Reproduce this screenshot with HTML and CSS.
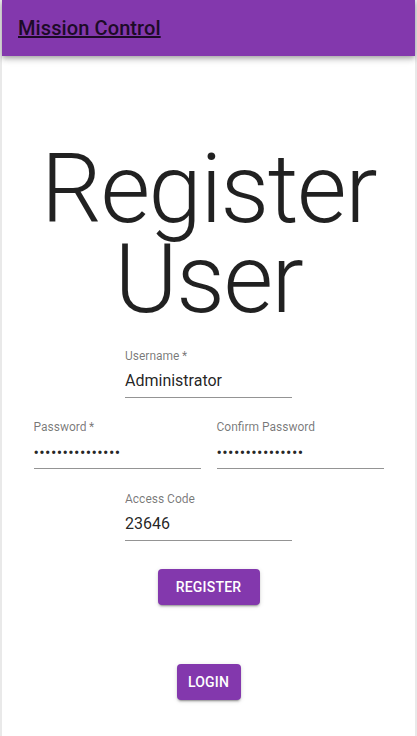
FILE: index.html
```html
<!DOCTYPE html>
<html lang="en">
<head>
<meta charset="utf-8">
<title>Mission Control</title>
<link rel="stylesheet" href="styles.css">
</head>
<body>
<div class="page">
  <header class="appbar">
    <a class="brand" href="#">Mission Control</a>
  </header>
  <main class="content">
    <h1 class="title">Register User</h1>
    <form class="form">
      <div class="row">
        <div class="field">
          <label class="label">Username&thinsp;*</label>
          <div class="input">Administrator</div>
        </div>
      </div>
      <div class="row">
        <div class="field">
          <label class="label">Password&thinsp;*</label>
          <div class="input dots">•••••••••••••••</div>
        </div>
        <div class="field">
          <label class="label">Confirm Password</label>
          <div class="input dots">•••••••••••••••</div>
        </div>
      </div>
      <div class="row">
        <div class="field">
          <label class="label">Access Code</label>
          <div class="input">23646</div>
        </div>
      </div>
      <div class="actions">
        <button type="button" class="btn btn-register">Register</button>
      </div>
      <div class="actions login">
        <button type="button" class="btn btn-login">Login</button>
      </div>
    </form>
  </main>
</div>
</body>
</html>
```
FILE: styles.css
```css
* { box-sizing: border-box; }
html, body { margin: 0; padding: 0; }
body {
  background: #e9e9e9;
  font-family: Roboto, "Liberation Sans", sans-serif;
  color: rgba(0,0,0,0.87);
}
.page {
  margin: 0 2px;
  min-height: 736px;
  background: #fff;
}
.appbar {
  height: 56px;
  background: #8338ad;
  display: flex;
  align-items: center;
  padding-left: 16px;
  box-shadow: 0 2px 4px -1px rgba(0,0,0,0.2), 0 4px 5px 0 rgba(0,0,0,0.14), 0 1px 10px 0 rgba(0,0,0,0.12);
  position: relative;
}
.brand {
  font-size: 20px;
  font-weight: 500;
  color: #1d0b27;
  text-decoration: underline;
  letter-spacing: 0.1px;
}
.content {
  display: flex;
  flex-direction: column;
  align-items: center;
}
.title {
  margin: 88px 0 0;
  font-size: 96px;
  font-weight: 300;
  letter-spacing: -1.5px;
  line-height: 90px;
  text-align: center;
  color: rgba(0,0,0,0.87);
  width: 360px;
}
.form {
  display: flex;
  flex-direction: column;
  align-items: center;
  margin-top: 26px;
}
.row {
  display: flex;
  gap: 16px;
  margin-bottom: 23px;
}
.row:nth-child(2) {
  margin-bottom: 24px;
}
.field {
  width: 167px;
  display: flex;
  flex-direction: column;
}
.label {
  font-size: 12px;
  line-height: 12px;
  color: rgba(0,0,0,0.54);
  height: 12px;
}
.input {
  margin-top: 3px;
  font-size: 16px;
  line-height: 19px;
  padding: 6px 0 7px;
  border-bottom: 1px solid rgba(0,0,0,0.42);
  color: rgba(0,0,0,0.87);
}
.dots {
  font-size: 16px;
  letter-spacing: 0.4px;
  line-height: 19px;
  padding: 7px 0 6px;
}
.actions {
  margin-top: 5px;
}
.actions.login {
  margin-top: 59px;
}
.btn {
  font-family: Roboto, "Liberation Sans", sans-serif;
  font-size: 14px;
  font-weight: 500;
  text-transform: uppercase;
  letter-spacing: 0.2px;
  line-height: 24px;
  padding: 6px 0;
  border: 0;
  border-radius: 4px;
  background: #8338ad;
  color: #fff;
  text-align: center;
  box-shadow: 0 3px 1px -2px rgba(0,0,0,0.2), 0 2px 2px 0 rgba(0,0,0,0.14), 0 1px 5px 0 rgba(0,0,0,0.12);
  cursor: pointer;
}
.btn-register { width: 102px; }
.btn-login { width: 64px; }
```
